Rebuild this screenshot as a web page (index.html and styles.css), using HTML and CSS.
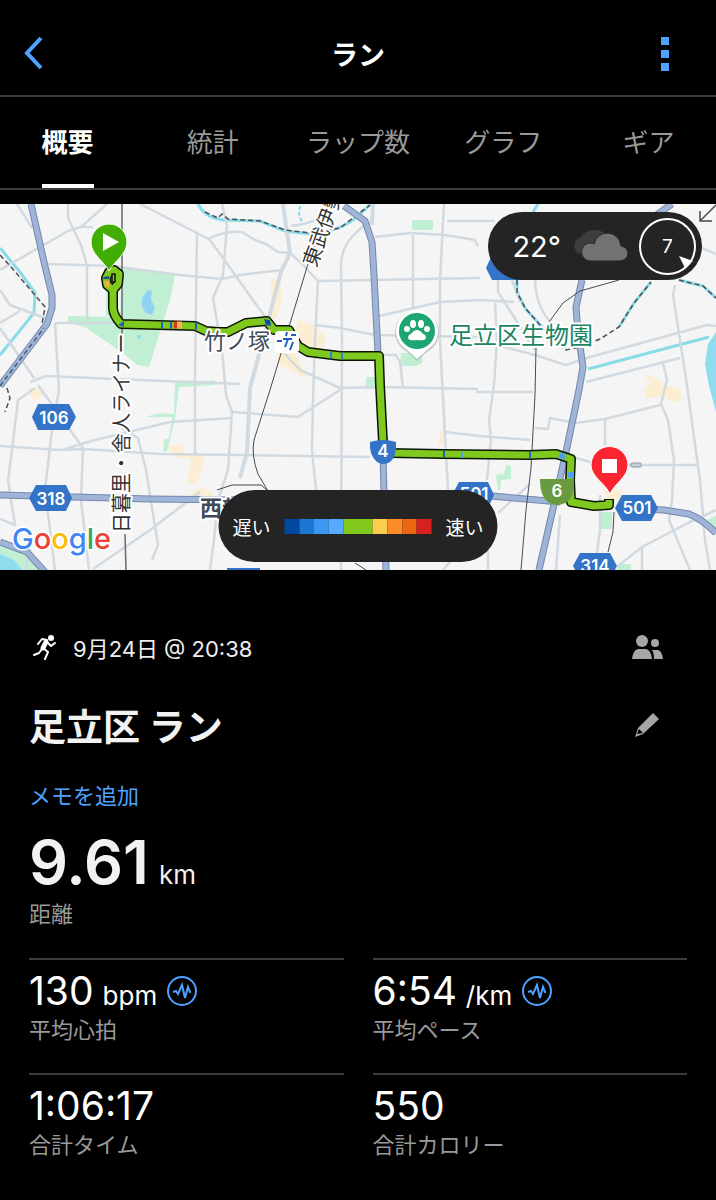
FILE: index.html
```html
<!DOCTYPE html>
<html lang="ja">
  <head>
    <meta charset="utf-8">
    <meta name="viewport" content="width=device-width, initial-scale=1">
    <title>ラン</title>
    <link rel="stylesheet" href="styles.css">
  </head>

  <body>
    <header class="header">
      <button type="button" class="icon-btn" aria-label="戻る">
        <svg width="24" height="36" viewBox="0 0 24 36"><path d="M19 2 L5 17 L19 32" fill="none" stroke="#4da3ff" stroke-width="4"/></svg>
      </button>
      <h1 class="header-title">ラン</h1>
      <button type="button" class="icon-btn icon-btn-right" aria-label="メニュー">
        <svg width="8" height="34" viewBox="0 0 8 34" fill="#4da3ff"><path d="M0 0h8v8H0zM0 13h8v8H0zM0 26h8v8H0z"/></svg>
      </button>
    </header>

    <nav class="tabs">
      <div class="tabs-inner">
        <a href="#" class="tab tab-active">概要</a>
        <a href="#" class="tab">統計</a>
        <a href="#" class="tab">ラップ数</a>
        <a href="#" class="tab">グラフ</a>
        <a href="#" class="tab">ギア</a>
      </div>
    </nav>

    <div class="map-container">
      <svg class="map" viewBox="0 204 716 366">
        <rect x="0" y="204" width="716" height="366" fill="#f5f5f5"/>

        <!-- built up areas -->
        <g fill="#fbeed3">
          <path d="M271 279h9l2 20-6 20-7-2 2-20z"/>
          <path d="M298 320l14 4 8 8 6 4-2 10-10 9-14-5-6-14z"/>
          <path d="M278 350h16l8 18 6 4-4 6-10-6-16-8z"/>
          <path d="M28 390l10-3 5 8-9 6z"/>
          <path d="M168 447l14-3 2 10 20 2-2 14-6 14-9-1 4-24-20-2z"/>
          <path d="M190 493l12-6 10 6v7h-22z"/>
          <path d="M443 398h3v48h-8l2-14 3-4z"/>
          <path d="M644 374l12 4 10 8 14 2 2 12-10 2-8-6-18 2-2-10 6-4z"/>
          <path d="M604 490h18v10h-16z"/>
        </g>

        <!-- parks -->
        <g fill="#c1efd3">
          <path d="M122 267l53 8-5 25-21 67-12-2-14-12-38-26-17-4v-7l52 1z"/>
          <path d="M106 280h7v36h-7z"/>
          <path d="M175 381l30 0 10-1v5l-36 2-4 32-8 32-4 1 1-12 5-2 3-21h-25q8-5 27-3z"/>
          <rect x="412" y="220" width="21" height="10"/>
          <path d="M401 353h21v10l-6 3h-16z"/>
          <rect x="366" y="377" width="12" height="12"/>
          <path d="M496 475l8-1 2-9 5 1v13l-10 1-1 10-2 0z"/>
          <rect x="599" y="512" width="13" height="17"/>
          <rect x="617" y="564" width="14" height="6"/>
          <path d="M706 520l10-4v20z"/>
          <path d="M0 546l22 6 20 18H0z"/>
        </g>

        <!-- water -->
        <g fill="#8fdcef">
          <path d="M142 298l6-8 4 1-1 9 4 7-3 8-6-2-4-6z" fill="#8fd3f0"/>
          <circle cx="139" cy="337" r="2"/>
          <path d="M716 332l-8 12-3 20 4 22 7 26z"/>
          <path d="M0 554l14 6 8 10H0z"/>
        </g>
        <g fill="none" stroke="#8adbe8" stroke-width="3">
          <path d="M0 248 L20 272 35 293 34 313 0 355"/>
          <path d="M198 204 C203 214 212 219 225 220 L260 221 285 231 310 234 Q340 232 358 216 L370 205"/>
          <path d="M588 369 L709 337"/>
          <path d="M538 204 L533 212"/>
          <path d="M517 280 L517 292 525 308 540 325 566 348"/>
          <path d="M619 327 L634 303 651 282"/>
          <path d="M679 280 L703 286 716 298"/>
        </g>
        <path d="M300 206 L299 214 302 222" fill="none" stroke="#8adbe8" stroke-width="2" stroke-dasharray="4 2"/>

        <!-- streets -->
        <g fill="none" stroke="#d2dae1" stroke-width="2.5" stroke-linejoin="round">
          <path d="M17 204 L32 228"/>
          <path d="M0 270 L68 231 81 227 107 204"/>
          <path d="M68 204 V218 L81 245 87 265 V320"/>
          <path d="M81 227 H93"/>
          <path d="M48 264 L112 266 180 275 222 279 240 275 282 270"/>
          <path d="M0 290 L10 305 45 318"/>
          <path d="M0 323 L20 311"/>
          <path d="M140 204 L197 233 210 240 268 321"/>
          <path d="M197 233 L195 375 V455"/>
          <path d="M208 239 Q225 230 242 232 L255 240 266 244 278 252 290 253 300 262 318 281 480 278"/>
          <path d="M222 204 L227 225 223 275 213 298 222 350 226 395 232 412 228 470 218 500 214 540 210 570"/>
          <path d="M55 323 H124"/>
          <path d="M55 323 L59 390 52 430 45 490 55 570"/>
          <path d="M0 328 L34 378"/>
          <path d="M30 382 L46 376 140 380 240 384"/>
          <path d="M0 446 L60 450 83 449 160 454 370 457"/>
          <path d="M65 449 L95 440 170 422 232 418"/>
          <path d="M38 385 L83 448 81 500 89 570"/>
          <path d="M35 388 L18 400 12 450 8 480 15 525 0 519"/>
          <path d="M122 428 L138 438 146 470 158 545 152 560"/>
          <path d="M93 569 L150 530 200 492"/>
          <path d="M30 549 L25 570"/>
          <path d="M291 226 Q320 223 330 208"/>
          <path d="M285 354 L300 370 340 388"/>
          <path d="M232 412 L298 417 340 390"/>
          <path d="M318 281 L315 340 313 400 312 450 316 490"/>
          <path d="M370 222 Q341 240 341 265 L342 340 341 570"/>
          <path d="M315 325 L340 328 375 335 478 337"/>
          <path d="M375 237 L410 233 445 235 475 240 478 246"/>
          <path d="M413 235 V308"/>
          <path d="M444 204 L440 280 440 340 443 400 448 490"/>
          <path d="M379 316 L440 302 480 300 514 302"/>
          <path d="M383 355 H396 L400 362 403 388"/>
          <path d="M340 388 L383 387 478 389"/>
          <path d="M445 432 L480 436 530 440"/>
          <path d="M447 221 H495"/>
          <path d="M498 280 V292 L535 350"/>
          <path d="M495 303 L497 340 494 385 489 420 491 440 487 480"/>
          <path d="M535 280 Q536 308 553 325"/>
          <path d="M512 280 L520 302"/>
          <path d="M675 285 L673 295 687 385 693 430 700 480 705 540 710 570"/>
          <path d="M500 346 L535 355 566 365 590 357 707 325 716 326"/>
          <path d="M586 382 L680 358"/>
          <path d="M663 363 L667 380 661 404 668 420 674 460 672 500 669 520 690 570"/>
          <path d="M702 248 L716 254"/>
          <path d="M476 392 L533 392"/>
          <path d="M535 428 L548 429 550 418 575 423 605 419 660 405"/>
          <path d="M605 419 V445"/>
          <path d="M576 458 L590 462 M610 465 H698"/>
          <path d="M618 566 L642 547 688 523 716 510 M642 547 V570"/>
          <path d="M600 495 V530 L596 560"/>
          <path d="M560 515 L556 570"/>
          <path d="M498 513 L530 484"/>
          <path d="M488 520 V570"/>
          <path d="M443 570 L455 556"/>
        </g>
        <g fill="none" stroke="#d2dae1" stroke-width="4">
          <path d="M283 204 L290 253 281 272 268 321 250 388 247 452 240 478"/>
          <path d="M373 204 L372 225"/>
        </g>

        <!-- boundary lines -->
        <g fill="none" stroke="#4c4f54" stroke-width="1.5" stroke-dasharray="5 3">
          <path d="M0 255 L12 268 45 307 41 330"/>
          <path d="M205 212 L218 218 222 214 228 219 260 221 285 230 310 233 340 228 370 205"/>
          <path d="M517 280 L517 292 525 308 540 325 556 343 566 350 580 347 600 339 619 327 634 303 651 282"/>
          <path d="M679 280 L703 286 716 298"/>
          <path d="M7 388 L10 398 5 412"/>
        </g>

        <!-- highways -->
        <g fill="none" stroke="#7487ad" stroke-width="7" stroke-linejoin="round">
          <path d="M31 204 L44 262 52 295 52 308 47 324 0 386"/>
          <path d="M0 495 L150 499 240 500"/>
          <path d="M480 495 L560 502 M640 509 L664 510 689 514 Q702 519 716 533"/>
          <path d="M344 206 L365 221 372 242 374 275 378 353"/>
          <path d="M383 455 L386 570"/>
          <path d="M672 204 L655 216 M582 280 L576 307 578 333 583 367 579 390 566 452 539 570"/>
          <path d="M0 542 L27 552 45 572"/>
        </g>
        <g fill="none" stroke="#a0b4d8" stroke-width="5" stroke-linejoin="round">
          <path d="M31 204 L44 262 52 295 52 308 47 324 0 386"/>
          <path d="M0 495 L150 499 240 500"/>
          <path d="M480 495 L560 502 M640 509 L664 510 689 514 Q702 519 716 533"/>
          <path d="M344 206 L365 221 372 242 374 275 378 353"/>
          <path d="M383 455 L386 570"/>
          <path d="M672 204 L655 216 M582 280 L576 307 578 333 583 367 579 390 566 452 539 570"/>
          <path d="M0 542 L27 552 45 572"/>
        </g>
        <path d="M0 386 L44 328" fill="none" stroke="#4c5a70" stroke-width="1.5" stroke-dasharray="5 3"/>
        <rect x="631" y="463" width="10" height="4" rx="1" fill="#c5d0d8" stroke="#8b9aa5"/>

        <!-- railways -->
        <g fill="none" stroke="#4a4a4a" stroke-width="1">
          <path d="M122 204 V334 M125 534 L126 570" stroke="#666a70" stroke-width="1.5"/>
          <path d="M334 196 L307 267 270 390 254 440 Q251 455 258 474 L268 491"/>
          <path d="M217 490 L232 485 H261 L268 491"/>
          <path d="M619 280 L580 291 563 303 549 322"/>
          <path d="M536 348 L535 395 531 468 526 510 521 570"/>
          <path d="M614 512 L613 532 608 552"/>
          <path d="M355 563 L366 570"/>
          <path d="M716 205 L700 221 M700 211 V221 H712" stroke-width="1.5"/>
        </g>

        <!-- route -->
        <g fill="none" stroke-linejoin="round">
          <g stroke="#0c1402" stroke-width="10">
            <path d="M113 290 L107 285 106 278 109 272 114 270 119 274 118 284 Z"/>
            <path d="M113 288 V308 Q113 315 121 324 L195 326 206 331 218 332 228 332 246 323 267 321 274 330 289 330 298 346 308 352 340 356 379 356 380 385 383 442"/>
            <path d="M390 453 L443 454 529 455 556 454 571 459 570 480 571 502 594 506 609 505 V499"/>
          </g>
          <g stroke="#7fc91f" stroke-width="7">
            <path d="M113 290 L107 285 106 278 109 272 114 270 119 274 118 284 Z"/>
            <path d="M113 288 V308 Q113 315 121 324 L195 326 206 331 218 332 228 332 246 323 267 321 274 330 289 330 298 346 308 352 340 356 379 356 380 385 383 442"/>
            <path d="M390 453 L443 454 529 455 556 454 571 459 570 480 571 502 594 506 609 505 V500"/>
          </g>
          <rect x="112" y="274" width="3" height="8" fill="#7fc91f" stroke="#0c1402" stroke-width="1.5"/>
          <path d="M102 279h7v-3l-5 1z" fill="#1c4f86"/>
          <path d="M104 281h5v7l-4-2z" fill="#f3b03c"/>
          <path d="M118 325l6-4v6z" fill="#1c62b8"/>
          <path d="M264 319l6 1 1 6-5-1z" fill="#0f4da8"/>
          <path d="M177 325h5" stroke="#fcb04a" stroke-width="7"/>
          <path d="M174 325h3" stroke="#e3301f" stroke-width="7"/>
          <path d="M161 325h2M170 325h2M195 326h2M443 454h2M529 455h2" stroke="#1c62b8" stroke-width="7"/>
          <path d="M330 355h2M341 356h2" stroke="#2d7fd0" stroke-width="7"/>
          <path d="M461 455h2M559 455l6 2M568 475h6" stroke="#4f9ff0" stroke-width="6"/>
        </g>

        <!-- road numbers -->
        <g fill="#3374c8">
          <path d="M38 404h31l7 13-7 13H38l-6-13z"/>
          <path d="M36 485h30l6 13-6 13H36l-7-13z"/>
          <path d="M622 495h29l7 13-7 13h-29l-7-13z"/>
          <path d="M580 553h30l7 13-7 13h-30l-7-13z"/>
          <path d="M459 482h29l6 13-6 13h-29l-7-13z"/>
          <path d="M492 255h30v25h-30l-6-12z"/>
          <path d="M227 568h33v2h-33z"/>
          <path d="M370 442q13-4 26 0 1 14-6 20-7 4-13 0-8-7-7-20z"/>
        </g>
        <path d="M540 479h34q1 26-17 26-17-1-17-26z" fill="#6a9a3f"/>
        <g class="road-number">
          <text x="54" y="424">106</text>
          <text x="51" y="505">318</text>
          <text x="637" y="514">501</text>
          <text x="595" y="572">314</text>
          <text x="474" y="500">501</text>
          <text x="383" y="457">4</text>
          <text x="557" y="497">6</text>
        </g>

        <!-- place names -->
        <g class="place-name">
          <text class="rail-name" transform="translate(129 533) rotate(-90)">日暮里・舎人ライナー</text>
          <text class="rail-name" transform="translate(316 268) rotate(-70)">東武伊勢</text>
          <text x="204" y="349">竹ノ塚</text>
          <text class="place-bold" x="200" y="516">西新</text>
          <text class="place-green" x="449" y="344">足立区生物園</text>
        </g>

        <!-- station -->
        <rect x="275" y="331" width="24" height="22" rx="4" fill="#fff"/>
        <path d="M277 341h5M287 332l-1 4M291 335h5M283 339h9M288 339l-3 8M293 342l-3 8" fill="none" stroke="#1b5fc0" stroke-width="2"/>

        <!-- zoo pin -->
        <path d="M417 361l-10-9a22 22 0 1 1 20 0z" fill="#9aa0a6" opacity=".5"/>
        <path d="M417 359l-11-10a21 21 0 1 1 22 0z" fill="#fff"/>
        <circle cx="417" cy="331" r="18" fill="#1ca672"/>
        <g fill="#fff">
          <ellipse cx="407" cy="329" rx="3" ry="3"/>
          <ellipse cx="413" cy="324" rx="3" ry="4"/>
          <ellipse cx="421" cy="324" rx="3" ry="4"/>
          <ellipse cx="427" cy="329" rx="3" ry="3"/>
          <path d="M417 330c4 0 5 4 8 5 3 5-2 6-8 5-6 1-11 0-8-5 3-1 4-5 8-5z"/>
        </g>

        <!-- start and finish -->
        <path d="M109 271c-4-9-18-16-18-29a18 18 0 0 1 36 0c0 13-14 20-18 29z" fill="#42ae04" stroke="#fff" stroke-width="1"/>
        <path d="M103 233l16 9-16 9z" fill="#fff"/>
        <path d="M610 494c-4-10-19-17-19-29a18 18 0 0 1 37 0c0 12-14 19-18 29z" fill="#fb2430" stroke="#fff" stroke-width="1"/>
        <rect x="602" y="459" width="15" height="14" fill="#fff"/>

        <text class="map-logo" x="12" y="549"><tspan fill="#4285f4">G</tspan><tspan fill="#ea4335">o</tspan><tspan fill="#fbbc05">o</tspan><tspan fill="#4285f4">g</tspan><tspan fill="#34a853">l</tspan><tspan fill="#ea4335">e</tspan></text>
      </svg>

      <div class="weather">
        <span class="weather-temp">22°</span>
        <svg width="58" height="36" viewBox="0 0 58 36">
          <path d="M9 26a9 9 0 0 1 1-17Q15 1 25 2q9 0 13 10l-4 14z" fill="#3d3d3d"/>
          <path d="M19 33a9 9 0 0 1 1-18q2 0 3 1Q26 5 37 5q11 1 13 13 7 1 7 8-1 6-8 7z" fill="#727272" stroke="#242424"/>
        </svg>
        <div class="weather-wind">
          <span>7</span>
          <svg class="wind-arrow" width="16" height="14" viewBox="0 0 16 14"><path d="M1 1l14 5-8 7z" fill="#fff"/></svg>
        </div>
      </div>

      <div class="legend">
        <span>遅い</span>
        <div class="legend-bar">
          <i class="pace-1"></i><i class="pace-2"></i><i class="pace-3"></i><i class="pace-4"></i><i class="pace-5"></i>
          <i class="pace-6"></i><i class="pace-7"></i><i class="pace-8"></i><i class="pace-9"></i>
        </div>
        <span>速い</span>
      </div>
    </div>

    <main class="details">
      <div class="date-row">
        <svg width="25" height="26" viewBox="0 0 25 26">
          <circle cx="18" cy="4" r="3" fill="#fff"/>
          <g fill="none" stroke="#fff" stroke-linecap="round" stroke-linejoin="round">
            <path d="M5 10l4-5 5 1" stroke-width="2"/>
            <path d="M13 8l-3 6" stroke-width="5"/>
            <path d="M15 9l3 3 4-3" stroke-width="2"/>
            <path d="M9 15l-3 4-5 2" stroke-width="2"/>
            <path d="M10 14l5 4-3 7" stroke-width="2"/>
          </g>
        </svg>
        <span class="date-text">9月24日 @ 20:38</span>
        <button type="button" class="icon-btn icon-btn-right" aria-label="公開設定">
          <svg width="32" height="24" viewBox="0 0 32 24" fill="#a6a6a6">
            <circle cx="11" cy="6" r="6"/>
            <circle cx="24" cy="8" r="4"/>
            <path d="M1 24q1-9 6-10h8q5 1 6 10z"/>
            <path d="M21 15h6q4 1 5 9h-9q0-6-2-9z"/>
          </svg>
        </button>
      </div>

      <div class="title-row">
        <h2 class="title">足立区 ラン</h2>
        <button type="button" class="icon-btn icon-btn-right" aria-label="編集">
          <svg width="26" height="26" viewBox="0 0 26 26">
            <path d="M19 1l6 6L9 22l-8 3 3-9z" fill="#a6a6a6"/>
            <path d="M5 17l4 4-6 1z" fill="#000"/>
          </svg>
        </button>
      </div>

      <a href="#" class="memo-link">メモを追加</a>

      <div class="metric-main"><span class="metric-big">9.61</span> <span class="unit">km</span></div>
      <p class="label">距離</p>

      <div class="metrics">
        <div class="metric">
          <div class="value">130 <span class="unit">bpm</span>
            <svg class="pulse" width="32" height="32" viewBox="0 0 32 32" fill="none" stroke="#4da3ff"><circle cx="16" cy="16" r="14" stroke-width="2"/><path d="M7 17l3-1 2 3 4-9 3 13 3-11 2 5h1" stroke-width="2"/></svg>
          </div>
          <p class="label">平均心拍</p>
        </div>
        <div class="metric">
          <div class="value">6:54 <span class="unit">/km</span>
            <svg class="pulse" width="32" height="32" viewBox="0 0 32 32" fill="none" stroke="#4da3ff"><circle cx="16" cy="16" r="14" stroke-width="2"/><path d="M7 17l3-1 2 3 4-9 3 13 3-11 2 5h1" stroke-width="2"/></svg>
          </div>
          <p class="label">平均ペース</p>
        </div>
        <div class="metric">
          <div class="value">1:06:17</div>
          <p class="label">合計タイム</p>
        </div>
        <div class="metric">
          <div class="value">550</div>
          <p class="label">合計カロリー</p>
        </div>
      </div>
    </main>
  </body>
</html>
```
FILE: styles.css
```css
:root {
  --bg: #000;
  --panel: #242424;
  --line: #3c3c3c;
  --text: #fff;
  --text-muted: #999;
  --accent: #4da3ff;
}
* {
  box-sizing: border-box;
  margin: 0;
  padding: 0;
}
body {
  background: var(--bg);
  color: var(--text);
  font-family: Inter, "Noto Sans CJK JP", sans-serif;
}
svg {
  display: block;
  flex: none;
}

.icon-btn {
  background: none;
  border: none;
  cursor: pointer;
}
.icon-btn-right {
  justify-self: end;
  margin-left: auto;
}

.header {
  display: grid;
  grid-template-columns: 1fr auto 1fr;
  align-items: center;
  height: 97px;
  padding: 12px 47px 0 22px;
  border-bottom: 2px solid var(--line);
}
.header .icon-btn {
  width: 24px;
}
.header .icon-btn-right {
  width: 8px;
}
.header-title {
  font-size: 27px;
  font-weight: 700;
  margin-left: 25px;
}

.tabs {
  overflow: hidden;
  border-bottom: 2px solid var(--line);
  margin-bottom: 14px;
}
.tabs-inner {
  display: grid;
  grid-template-columns: repeat(5, 1fr);
  justify-items: center;
  margin: 0 -5px;
}
.tab {
  height: 91px;
  line-height: 83px;
  padding-top: 4px;
  border-bottom: 4px solid transparent;
  color: var(--text-muted);
  font-size: 26px;
  text-decoration: none;
  white-space: nowrap;
}
.tab-active {
  color: var(--text);
  font-weight: 700;
  border-bottom-color: var(--text);
}

.map-container {
  position: relative;
}
.map {
  width: 100%;
  height: auto;
}
.road-number {
  fill: #fff;
  font-size: 17px;
  font-weight: 600;
  text-anchor: middle;
}
.place-name {
  fill: #3f4a59;
  stroke: #fff;
  stroke-width: 4px;
  stroke-linejoin: round;
  paint-order: stroke;
  font-size: 22px;
  font-weight: 400;
}
.rail-name {
  fill: #333;
  font-size: 20px;
}
.place-bold {
  font-weight: 700;
}
.place-green {
  fill: #1d8562;
  font-size: 24px;
}
.map-logo {
  font-size: 29px;
  font-weight: 500;
  stroke: #fff;
  stroke-width: 3px;
  paint-order: stroke;
}

.weather {
  position: absolute;
  top: 8px;
  right: 14px;
  display: flex;
  align-items: center;
  gap: 10px;
  height: 68px;
  padding: 0 6px 0 24px;
  border-radius: 34px;
  background: var(--panel);
}
.weather-temp {
  font-size: 29px;
}
.weather-wind {
  position: relative;
  display: flex;
  align-items: center;
  justify-content: center;
  width: 57px;
  height: 57px;
  border: 2px solid var(--text);
  border-radius: 50%;
  font-size: 19px;
}
.wind-arrow {
  position: absolute;
  right: 0;
  bottom: 4px;
}

.legend {
  position: absolute;
  left: 50%;
  bottom: 8px;
  transform: translateX(-50%);
  display: flex;
  align-items: center;
  gap: 14px;
  height: 72px;
  padding: 0 14px;
  border-radius: 36px;
  background: var(--panel);
  font-size: 19px;
  white-space: nowrap;
}
.legend-bar {
  display: flex;
  width: 147px;
  height: 15px;
}
.legend-bar i {
  flex: 1;
}
.pace-1 { background: #0048a0; }
.pace-2 { background: #1c76d2; }
.pace-3 { background: #3b97f4; }
.pace-4 { background: #58aaff; }
.legend-bar .pace-5 { background: #80c81c; flex: 2; }
.pace-6 { background: #fccc4c; }
.pace-7 { background: #fc8c28; }
.pace-8 { background: #ea6810; }
.pace-9 { background: #d82022; }

.details {
  padding: 60px 29px 38px;
}
.date-row,
.title-row {
  display: flex;
  align-items: center;
  padding-right: 24px;
}
.date-row {
  height: 34px;
  padding-left: 4px;
  margin-bottom: 36px;
}
.date-text {
  margin-left: 15px;
  font-size: 22px;
  color: #eee;
}
.title-row {
  height: 50px;
  margin-bottom: 30px;
  padding-right: 27px;
}
.title {
  font-size: 37px;
  font-weight: 700;
  color: #f2f2f2;
}
.memo-link {
  display: block;
  line-height: 32px;
  margin-bottom: 14px;
  color: var(--accent);
  font-size: 22px;
  text-decoration: none;
}
.metric-main {
  display: flex;
  align-items: baseline;
  gap: 10px;
  height: 72px;
  line-height: 72px;
  color: #f2f2f2;
}
.metric-big {
  font-size: 61px;
  font-weight: 600;
}
.unit {
  font-size: 26px;
}
.label {
  line-height: 32px;
  color: var(--text-muted);
  font-size: 22px;
}
.metrics {
  display: grid;
  grid-template-columns: 1fr 1fr;
  column-gap: 29px;
  margin-top: 28px;
}
.metric {
  border-top: 2px solid var(--line);
  padding: 8px 0 27px;
}
.value {
  display: flex;
  align-items: baseline;
  gap: 9px;
  height: 46px;
  line-height: 46px;
  font-size: 39px;
}
.pulse {
  align-self: center;
}
```
